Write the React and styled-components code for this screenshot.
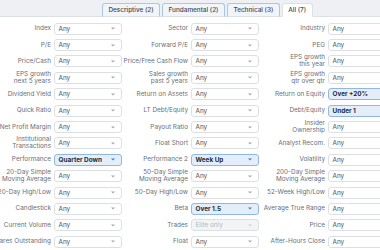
import React from 'react'
import styled, { createGlobalStyle } from 'styled-components'

const GlobalStyle = createGlobalStyle`
    body {
        margin: 0;
        background: #ffffff;
        font-family: 'Inter', 'Liberation Sans', sans-serif;
        overflow: hidden;
    }
`;

const Page = styled.div`
    width: 380px;
    height: 250px;
    overflow: hidden;
`;

const TabBar = styled.div`
    height: 16px;
    display: flex;
    align-items: flex-end;
    gap: 2px;
    padding-left: 102px;
    background-color: #eef0f3;
    border-bottom: 1px solid #dde1e6;
`;

const Tab = styled.div`
    height: 12px;
    padding: 0 5.5px;
    margin-bottom: -1px;
    display: flex;
    align-items: center;
    border: 1px solid ${(p) => (p.$active ? '#dde1e6' : '#a8c8ea')};
    border-bottom: 1px solid ${(p) => (p.$active ? '#ffffff' : '#dde1e6')};
    border-radius: 3px 3px 0 0;
    background-color: ${(p) => (p.$active ? '#ffffff' : '#f1f5fa')};
    color: #3f454d;
    font-size: 6.4px;
    font-weight: 500;
    white-space: nowrap;
`;

const Grid = styled.div`
    display: grid;
    grid-template-columns: repeat(3, 134px);
    grid-auto-rows: 16.4px;
    column-gap: 3px;
    margin-left: -12px;
    padding-top: 3.5px;
`;

const Field = styled.div`
    display: grid;
    grid-template-columns: 63px 68px;
    column-gap: 3px;
    align-items: center;
`;

const Label = styled.div`
    display: flex;
    flex-direction: column;
    align-items: flex-end;
    justify-content: center;
    font-size: 6.4px;
    line-height: 7px;
    color: #6a7079;
    white-space: nowrap;
`;

const Select = styled.div`
    height: 12px;
    box-sizing: border-box;
    display: flex;
    align-items: center;
    justify-content: space-between;
    padding: 0 6px 0 3.5px;
    border: 1px solid ${(p) => (p.$active ? '#8fb8e6' : '#dcdfe4')};
    border-radius: 3px;
    background-color: ${(p) => (p.$active ? '#e4eefa' : p.$disabled ? '#f3f4f6' : '#ffffff')};
    color: ${(p) => (p.$active ? '#262b33' : p.$disabled ? '#b3b8bf' : '#4a5059')};
    font-size: 6.4px;
    font-weight: ${(p) => (p.$active ? 700 : 400)};
    white-space: nowrap;
`;

const Caret = ({ color }) => (
    <svg width="4" height="3" viewBox="0 0 4 3">
        <path d="M0 0.4 L4 0.4 L2 2.6 Z" fill={color} />
    </svg>
);

const tabs = [
    { name: 'Descriptive (2)' },
    { name: 'Fundamental (2)' },
    { name: 'Technical (3)' },
    { name: 'All (7)', active: true },
];

const rows = [
    [['Index'], ['Sector'], ['Industry']],
    [['P/E'], ['Forward P/E'], ['PEG']],
    [['Price/Cash'], ['Price/Free Cash Flow'], ['EPS growth', 'this year']],
    [['EPS growth', 'next 5 years'], ['Sales growth', 'past 5 years'], ['EPS growth', 'qtr over qtr']],
    [['Dividend Yield'], ['Return on Assets'], ['Return on Equity', 'Over +20%']],
    [['Quick Ratio'], ['LT Debt/Equity'], ['Debt/Equity', 'Under 1']],
    [['Net Profit Margin'], ['Payout Ratio'], ['Insider', 'Ownership']],
    [['Institutional', 'Transactions'], ['Float Short'], ['Analyst Recom.']],
    [['Performance', 'Quarter Down'], ['Performance 2', 'Week Up'], ['Volatility']],
    [['20-Day Simple', 'Moving Average'], ['50-Day Simple', 'Moving Average'], ['200-Day Simple', 'Moving Average']],
    [['20-Day High/Low'], ['50-Day High/Low'], ['52-Week High/Low']],
    [['Candlestick'], ['Beta', 'Over 1.5'], ['Average True Range']],
    [['Current Volume'], ['Trades', 'Elite only'], ['Price']],
    [['Shares Outstanding'], ['Float'], ['After-Hours Close']],
];

// second entry of a cell is either a second label line or a chosen value
const values = ['Over +20%', 'Under 1', 'Quarter Down', 'Week Up', 'Over 1.5', 'Elite only'];

function Filter({ cell }) {
    const last = cell[cell.length - 1];
    const hasValue = values.includes(last);
    const lines = hasValue ? cell.slice(0, -1) : cell;
    const disabled = last === 'Elite only';
    const active = hasValue && !disabled;
    const caretColor = active ? '#3d7fd6' : disabled ? '#cfd3d8' : '#a3a9b1';
    return (
        <Field>
            <Label>
                {lines.map((l) => (
                    <span key={l}>{l}</span>
                ))}
            </Label>
            <Select $active={active} $disabled={disabled}>
                <span>{hasValue ? last : 'Any'}</span>
                <Caret color={caretColor} />
            </Select>
        </Field>
    );
}

export default function App() {
    return (
        <Page>
            <GlobalStyle />
            <TabBar>
                {tabs.map((t) => (
                    <Tab key={t.name} $active={t.active}>
                        {t.name}
                    </Tab>
                ))}
            </TabBar>
            <Grid>
                {rows.map((row, i) =>
                    row.map((cell, j) => <Filter key={i + '-' + j} cell={cell} />)
                )}
            </Grid>
        </Page>
    );
}
